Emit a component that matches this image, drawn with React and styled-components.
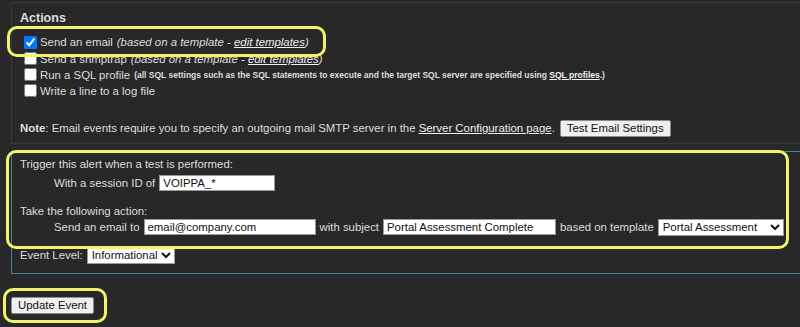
import React from 'react';
import styled, { createGlobalStyle } from 'styled-components';

const GlobalStyle = createGlobalStyle`
  html, body {
    margin: 0;
    background: #282828;
  }
  body {
    font-family: "Liberation Sans", Arial, sans-serif;
    font-size: 11.4px;
    color: #dedede;
  }
`;

const Page = styled.div`
  width: 800px;
  height: 327px;
  overflow: hidden;
  box-sizing: border-box;
  padding: 2px 0 0 11px;
`;

const ActionsPanel = styled.section`
  border: 1px solid #3a3a3a;
  border-right: none;
  padding: 7px 0 5px 8px;
`;

const Title = styled.div`
  font-size: 12.5px;
  font-weight: bold;
  line-height: 16px;
  margin-bottom: 8px;
`;

const Highlight = styled.span`
  position: relative;
  display: ${(p) => (p.$block ? 'block' : 'inline-block')};

  &::after {
    content: '';
    position: absolute;
    top: ${(p) => p.$t}px;
    left: ${(p) => p.$l}px;
    right: ${(p) => p.$r}px;
    bottom: ${(p) => p.$b}px;
    border: 3px solid #f3f36a;
    border-radius: 10px;
    pointer-events: none;
  }
`;

const CheckRow = styled.label`
  display: flex;
  align-items: center;
  height: 16px;
  line-height: 16px;
  white-space: nowrap;
`;

const Check = styled.input.attrs({ type: 'checkbox' })`
  width: 13px;
  height: 13px;
  margin: 0 3px 0 4px;
`;

const Hint = styled.span`
  font-style: italic;
  margin-left: 4px;
`;

const Small = styled.span`
  font-size: 8.5px;
  font-weight: bold;
  margin-left: 4px;
`;

const Link = styled.a`
  color: #f0f0f0;
  text-decoration: underline;
  cursor: pointer;
`;

const NoteRow = styled.div`
  display: flex;
  align-items: center;
  margin-top: 20px;
  height: 19px;
  white-space: nowrap;
`;

const Button = styled.button`
  font-family: "Liberation Sans", Arial, sans-serif;
  font-size: 11.4px;
  color: #111;
  background: #efefef;
  border: 1px solid #8a8a8a;
  border-radius: 2px;
  height: 17px;
  padding: 0 6px;
  margin-left: ${(p) => p.$ml || 0}px;
  line-height: 15px;
`;

const EventPanel = styled.section`
  margin-top: 7px;
  border: 1px solid #3f8a9a;
  border-right: none;
  padding: 4px 0 9px 8px;
`;

const Line = styled.div`
  display: flex;
  align-items: center;
  min-height: 16px;
  line-height: 16px;
  padding-left: ${(p) => (p.$indent ? 34 : 0)}px;
  margin-top: ${(p) => p.$mt || 0}px;
  white-space: nowrap;
  gap: 4px;
`;

const TextField = styled.input`
  font-family: "Liberation Sans", Arial, sans-serif;
  font-size: 11.4px;
  color: #111;
  background: #fff;
  border: 1px solid #999;
  width: ${(p) => p.$w}px;
  height: 16px;
  box-sizing: border-box;
  padding: 0 3px;
  margin: 0;
`;

const Select = styled.select`
  font-family: "Liberation Sans", Arial, sans-serif;
  font-size: 11.4px;
  color: #111;
  background: #fff;
  border: 1px solid #999;
  width: ${(p) => (p.$w ? `${p.$w}px` : 'auto')};
  height: 17px;
  box-sizing: border-box;
  padding: 0;
  margin: 0;
`;

const Footer = styled.div`
  padding: 23px 0 0 0;
`;

export default function App() {
  return (
    <>
      <GlobalStyle />
      <Page>
        <ActionsPanel>
          <Title>Actions</Title>
          <Highlight $t={-8} $l={-13} $r={-17} $b={-7}>
            <CheckRow>
              <Check defaultChecked />
              Send an email
              <Hint>
                (based on a template - <Link>edit templates</Link>)
              </Hint>
            </CheckRow>
          </Highlight>
          <CheckRow>
            <Check />
            Send a snmptrap
            <Hint>
              (based on a template - <Link>edit templates</Link>)
            </Hint>
          </CheckRow>
          <CheckRow>
            <Check />
            Run a SQL profile
            <Small>
              (all SQL settings such as the SQL statements to execute and the target SQL server are
              specified using <Link>SQL profiles</Link>.)
            </Small>
          </CheckRow>
          <CheckRow>
            <Check />
            Write a line to a log file
          </CheckRow>
          <NoteRow>
            <b>Note</b>: Email events require you to specify an outgoing mail SMTP server in the&nbsp;
            <Link>Server Configuration page</Link>.
            <Button $ml={5}>Test Email Settings</Button>
          </NoteRow>
        </ActionsPanel>

        <EventPanel>
          <Highlight $block $t={-6} $l={-14} $r={11} $b={-13}>
            <Line>Trigger this alert when a test is performed:</Line>
            <Line $indent $mt={3}>
              With a session ID of
              <TextField $w={116} defaultValue="VOIPPA_*" />
            </Line>
            <Line $mt={12}>Take the following action:</Line>
            <Line $indent>
              Send an email to
              <TextField $w={172} defaultValue="email@company.com" />
              with subject
              <TextField $w={173} defaultValue="Portal Assessment Complete" />
              based on template
              <Select $w={126} defaultValue="pa">
                <option value="pa">Portal Assessment</option>
              </Select>
            </Line>
          </Highlight>
          <Line $mt={11}>
            Event Level:
            <Select defaultValue="info">
              <option value="info">Informational</option>
            </Select>
          </Line>
        </EventPanel>

        <Footer>
          <Highlight $t={-9} $l={-8} $r={-13} $b={-9}>
            <Button>Update Event</Button>
          </Highlight>
        </Footer>
      </Page>
    </>
  );
}
